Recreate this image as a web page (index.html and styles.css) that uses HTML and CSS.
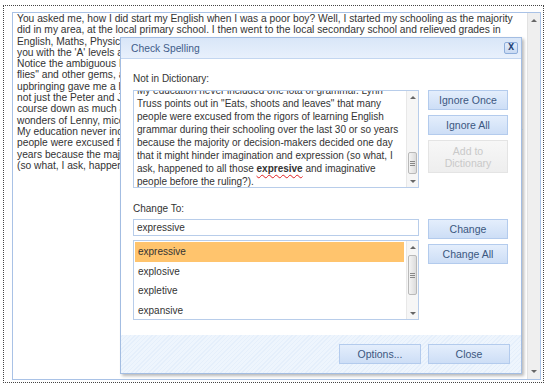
FILE: index.html
```html
<!DOCTYPE html>
<html lang="en">
<head>
    <meta charset="UTF-8">
    <title>Check Spelling</title>
    <link rel="stylesheet" href="styles.css">
</head>
<body>
    <div class="frame">
        <div class="editor">
            <div class="editor-text">
                You asked me, how I did start my English when I was a poor boy? Well, I started my schooling as the majority<br>
                did in my area, at the local primary school. I then went to the local secondary school and relieved grades in<br>
                English, Maths, Physics, Biology, Geography, Art, Graphical Design and Drama that would qualify<br>
                you with the 'A' levels and a good university place. My English lessons were all about<br>
                Notice the ambiguous English headlines: "Squad helps dog bite victim", "Time flies like an arrow; fruit<br>
                flies" and other gems, all of which I could read and understand. My humble working-class<br>
                upbringing gave me a healthy appetite for reading and I devoured books of every kind,<br>
                not just the Peter and Jane readers that we had in school. I worked my way through the<br>
                course down as much as I could, discovering along the way the absurd and hilarious<br>
                wonders of Lenny, mice and men, and the great novels of the English language.<br>
                My education never included one iota of grammar. Lynn Truss points out in "Eats, shoots and leaves" that many<br>
                people were excused from the rigors of learning English grammar during their schooling over the last 30 or so<br>
                years because the majority or decision-makers decided one day that it might hinder imagination and expression<br>
                (so what, I ask, happened to all those expresive and imaginative people before the ruling?).
            </div>
            <div class="scrollbar wide">
                <span class="arrow up"></span>
                <span class="arrow down"></span>
            </div>
        </div>

        <div class="dialog">
            <div class="dialog-title">
                <span>Check Spelling</span>
                <button class="close-btn">X</button>
            </div>
            <div class="dialog-body">
                <div class="label">Not in Dictionary:</div>
                <div class="row">
                    <div class="textbox">
                        <div class="textbox-text">
                            My education never included one iota of grammar. Lynn<br>
                            Truss points out in "Eats, shoots and leaves" that many<br>
                            people were excused from the rigors of learning English<br>
                            grammar during their schooling over the last 30 or so years<br>
                            because the majority or decision-makers decided one day<br>
                            that it might hinder imagination and expression (so what, I<br>
                            ask, happened to all those <span class="misspelled">expresive</span> and imaginative<br>
                            people before the ruling?).
                        </div>
                        <div class="scrollbar">
                            <span class="arrow-box"><span class="arrow up"></span></span>
                            <div class="track"><span class="thumb thumb-end"><i></i></span></div>
                            <span class="arrow-box"><span class="arrow down"></span></span>
                        </div>
                    </div>
                    <div class="buttons">
                        <button class="btn">Ignore Once</button>
                        <button class="btn">Ignore All</button>
                        <button class="btn disabled">Add to<br>Dictionary</button>
                    </div>
                </div>

                <div class="label change-label">Change To:</div>
                <div class="row">
                    <div class="change-col">
                        <div class="input">expressive</div>
                        <div class="listbox">
                            <ul class="suggestions">
                                <li class="selected">expressive</li>
                                <li>explosive</li>
                                <li>expletive</li>
                                <li>expansive</li>
                            </ul>
                            <div class="scrollbar">
                                <span class="arrow-box"><span class="arrow up"></span></span>
                                <div class="track"><span class="thumb thumb-start"><i></i></span></div>
                                <span class="arrow-box"><span class="arrow down"></span></span>
                            </div>
                        </div>
                    </div>
                    <div class="buttons">
                        <button class="btn">Change</button>
                        <button class="btn">Change All</button>
                    </div>
                </div>
            </div>
            <div class="dialog-footer">
                <button class="btn wide-btn">Options...</button>
                <button class="btn wide-btn">Close</button>
            </div>
        </div>
    </div>
</body>
</html>
```

FILE: styles.css
```css
* {
    margin: 0;
    padding: 0;
    box-sizing: border-box;
}

body {
    background: #fff;
    color: #333;
    font-family: "Liberation Sans", Arial, sans-serif;
    font-size: 10px;
}

/* outer dotted frame round the editor */
.frame {
    position: relative;
    width: 541px;
    height: 378px;
    margin: 5px 0 0 3px;
    padding: 6px 2px 2px 8px;
    border: 1px dotted #444;
}

.editor {
    display: flex;
    height: 100%;
    border: 1px solid #a9c2e6;
    background: #fff;
}

.editor-text {
    flex: 1;
    padding: 0 4px;
    font-size: 10.25px;
    line-height: 11.3px;
    white-space: nowrap;
    overflow: hidden;
}

/* scrollbars */
.scrollbar {
    display: flex;
    flex-direction: column;
    justify-content: space-between;
    width: 12px;
    background: #f6f6f6;
    border-left: 1px solid #e8e8e8;
}

.scrollbar.wide {
    width: 13px;
    padding: 6px 0;
    background: #efefef;
    border-left: 1px solid #e2e2e2;
}

.arrow-box {
    display: flex;
    align-items: center;
    justify-content: center;
    height: 12px;
}

.scrollbar.wide .arrow {
    align-self: center;
}

.arrow {
    width: 0;
    height: 0;
    border-left: 3px solid transparent;
    border-right: 3px solid transparent;
}

.arrow.up {
    border-bottom: 3px solid #666;
}

.arrow.down {
    border-top: 3px solid #666;
}

.track {
    flex: 1;
    display: flex;
    flex-direction: column;
    padding: 0 1px;
}

.thumb {
    display: flex;
    align-items: center;
    justify-content: center;
    border: 1px solid #b9b9b9;
    border-radius: 2px;
    background: linear-gradient(to right, #f4f4f4, #dcdcdc);
}

.thumb i {
    width: 5px;
    height: 5px;
    border-top: 1px solid #888;
    border-bottom: 1px solid #888;
    background: linear-gradient(#888, #888) center / 5px 1px no-repeat;
}

.thumb-end {
    height: 22px;
    margin-top: auto;
    margin-bottom: 1px;
}

.thumb-start {
    height: 40px;
    margin-top: 2px;
}

/* dialog window */
.dialog {
    position: absolute;
    left: 116px;
    top: 31px;
    width: 402px;
    height: 337px;
    display: flex;
    flex-direction: column;
    background: #fff;
    border: 1px solid #a3bde2;
    box-shadow: 2px 2px 3px rgba(0, 0, 0, 0.28);
}

.dialog-title {
    display: flex;
    justify-content: space-between;
    align-items: center;
    height: 21px;
    padding: 0 3px 0 10px;
    background: linear-gradient(#d9e6f8, #e8f0fc);
    border-bottom: 1px solid #c3d6f0;
    color: #3f5d8a;
    font-size: 10.3px;
}

.close-btn {
    width: 14px;
    height: 12px;
    border: 1px solid #8eaedb;
    border-radius: 2px;
    background: linear-gradient(#e2ecfa, #c9daf3);
    color: #27477a;
    font-family: "DejaVu Sans", sans-serif;
    font-size: 8px;
    font-weight: bold;
    line-height: 10px;
}

.dialog-body {
    padding: 13px 12px 0 12px;
}

.label {
    line-height: 13px;
    margin-bottom: 5px;
}

.change-label {
    margin-top: 14px;
    margin-bottom: 4px;
}

.row {
    display: flex;
    gap: 9px;
}

.textbox {
    display: flex;
    width: 286px;
    height: 98px;
    border: 1px solid #b8cdea;
    overflow: hidden;
}

.textbox-text {
    flex: 1;
    margin-top: -7px;
    padding-left: 3px;
    line-height: 13px;
    white-space: nowrap;
    overflow: hidden;
}

.misspelled {
    font-weight: bold;
    text-decoration: underline wavy #e02020;
    text-decoration-thickness: 1px;
    text-underline-offset: 2px;
}

.buttons {
    display: flex;
    flex-direction: column;
    gap: 5px;
    width: 80px;
}

.btn {
    height: 20px;
    border: 1px solid #b3cbed;
    background: linear-gradient(#e4eefc, #cddef6);
    color: #3b5780;
    font-family: "Liberation Sans", Arial, sans-serif;
    font-size: 10.5px;
    text-align: center;
}

.btn.disabled {
    height: 33px;
    border-color: #e4e4e4;
    background: linear-gradient(#f7f7f7, #eeeeee);
    color: #c9c9c9;
    line-height: 12px;
}

.change-col {
    width: 286px;
}

.input {
    height: 17px;
    padding-left: 3px;
    border: 1px solid #b8cdea;
    line-height: 15px;
}

.listbox {
    display: flex;
    height: 80px;
    margin-top: 4px;
    border: 1px solid #b8cdea;
}

.suggestions {
    flex: 1;
    list-style: none;
    padding: 1px;
}

.suggestions li {
    height: 19.5px;
    padding-left: 3px;
    line-height: 19.5px;
}

.suggestions li.selected {
    background: #ffc46d;
}

.listbox .scrollbar {
    margin-left: 1px;
}

.dialog-footer {
    display: flex;
    justify-content: flex-end;
    align-items: center;
    gap: 7px;
    height: 38px;
    margin-top: auto;
    padding-right: 11px;
    background: repeating-linear-gradient(-45deg, #eef5fd 0 2px, #e5effb 2px 3px);
}

.wide-btn {
    width: 82px;
}
```
